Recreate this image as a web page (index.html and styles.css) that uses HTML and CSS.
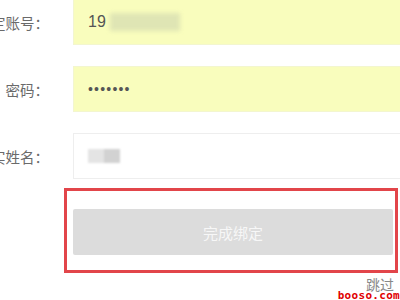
FILE: index.html
```html
<!DOCTYPE html>
<html lang="zh">
<head>
<meta charset="utf-8">
<link rel="stylesheet" href="styles.css">
</head>
<body>
<div class="form">
  <div class="row">
    <label class="label"><span class="label-text">绑定账号：</span></label>
    <div class="input autofill"><span class="val">19</span><span class="blur wide"></span></div>
  </div>
  <div class="row">
    <label class="label"><span class="label-text">密码：</span></label>
    <div class="input autofill"><span class="dots">•••••••</span></div>
  </div>
  <div class="row">
    <label class="label"><span class="label-text">真实姓名：</span></label>
    <div class="input"><span class="blur small"></span></div>
  </div>
  <div class="highlight">
    <button class="submit">完成绑定</button>
  </div>
  <div class="footer">
    <span class="skip">跳过</span>
    <span class="watermark">booso.com</span>
  </div>
</div>
</body>
</html>
```
FILE: styles.css
```css
html, body {
  margin: 0;
  padding: 0;
  background: #ffffff;
  overflow: hidden;
  width: 400px;
  height: 300px;
}
body {
  font-family: "Noto Sans CJK SC", "Liberation Sans", sans-serif;
  color: #666;
}
.form {
  margin-top: -1px;
  display: flex;
  flex-direction: column;
}
.row {
  display: flex;
  align-items: center;
  height: 46px;
  margin-bottom: 21px;
}
.label {
  width: 49px;
  flex: none;
  display: flex;
  justify-content: flex-end;
  overflow: hidden;
  margin-right: 24px;
}
.label-text {
  flex: none;
  font-family: "Noto Sans CJK TC", "Noto Sans CJK SC", sans-serif;
  font-size: 14.5px;
  color: #6a6a6a;
  white-space: nowrap;
}
.input {
  flex: none;
  width: 340px;
  height: 46px;
  box-sizing: border-box;
  border: 1px solid #eeeeee;
  background: #fff;
  display: flex;
  align-items: center;
  padding-left: 14px;
}
.input.autofill {
  background: #f9fdbd;
  border-color: #f3f6cf;
}
.val {
  font-family: "Liberation Sans", sans-serif;
  font-size: 16px;
  color: #555;
}
.dots {
  font-family: "Liberation Sans", sans-serif;
  font-size: 14px;
  letter-spacing: 1.2px;
  color: #555;
}
.blur {
  display: inline-block;
  filter: blur(2px);
}
.blur.wide {
  width: 70px;
  height: 18px;
  background: #dfe5b4;
  margin-left: 4px;
}
.blur.small {
  width: 32px;
  height: 14px;
  background: linear-gradient(90deg, #e4e4e4 0 50%, #d2d2d2 50% 100%);
  filter: blur(1px);
}
.highlight {
  margin-left: 64px;
  margin-top: -12px;
  width: 334px;
  height: 85px;
  box-sizing: border-box;
  border: 3px solid #e2454a;
  padding: 18px 2px 0 6px;
}
.submit {
  display: block;
  width: 100%;
  height: 46px;
  border: none;
  border-radius: 2px;
  background: #dcdcdc;
  color: #f7f7f7;
  font-family: "Noto Sans CJK SC", sans-serif;
  font-size: 15px;
  padding: 0;
}
.footer {
  position: relative;
  display: flex;
  justify-content: flex-end;
  padding-right: 6px;
  margin-top: 2px;
}
.skip {
  font-size: 14px;
  color: #888;
  line-height: 18px;
}
.watermark {
  position: absolute;
  right: 0;
  top: 15px;
  font-family: "DejaVu Sans Mono", monospace;
  font-size: 11px;
  font-weight: bold;
  color: #e00000;
  line-height: 11px;
  letter-spacing: 0.3px;
}
```
